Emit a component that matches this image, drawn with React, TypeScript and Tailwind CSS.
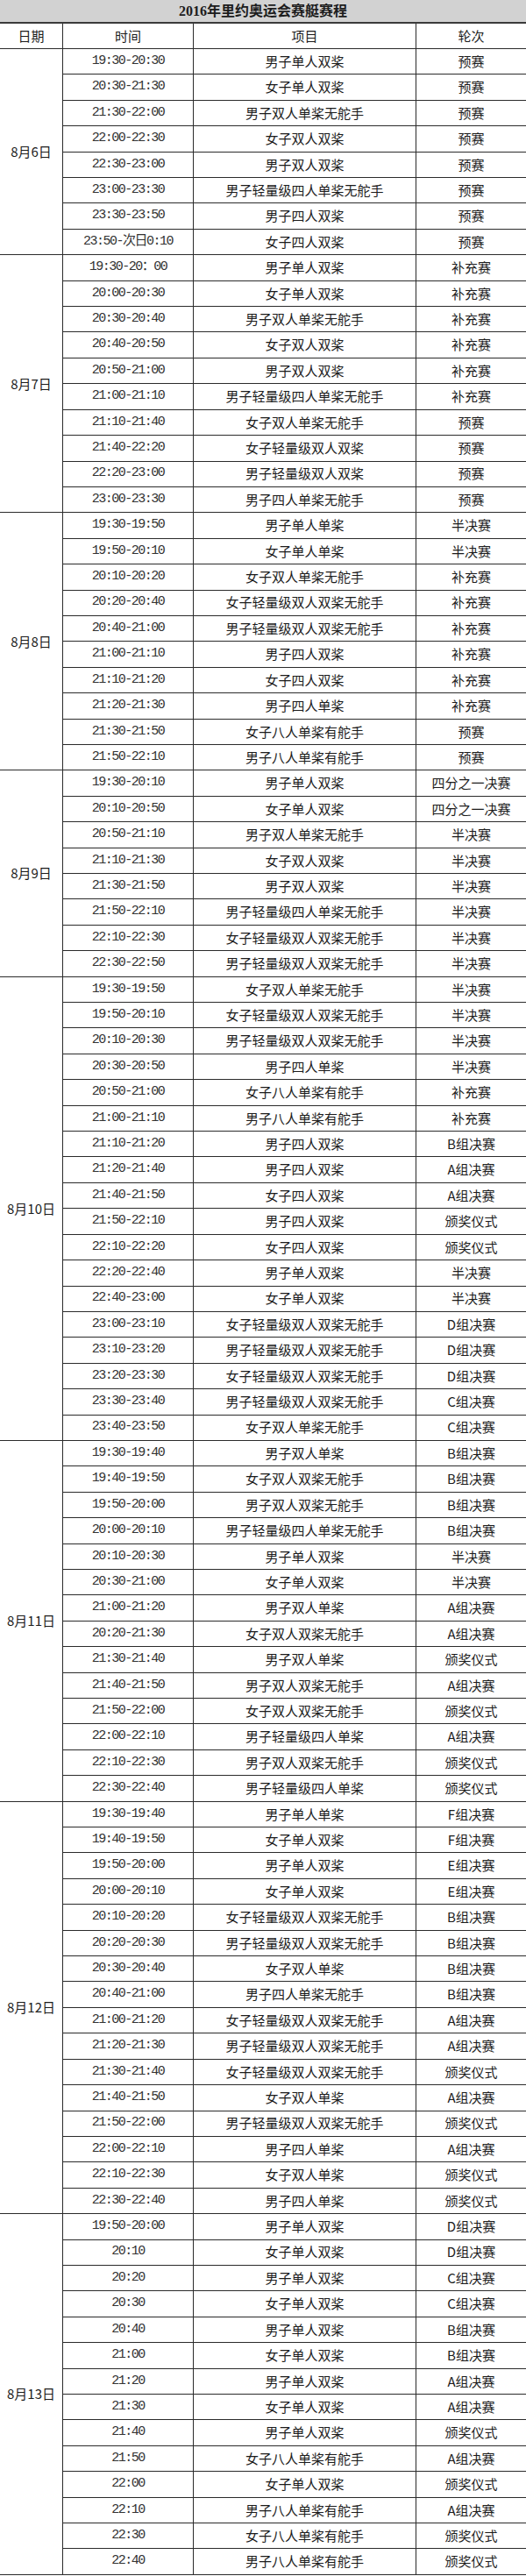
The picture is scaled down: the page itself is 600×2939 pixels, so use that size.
import clsx from "clsx";

type Row = [string, string, string];

const schedule: { date: string; rows: Row[] }[] = [
  {
    date: "8月6日",
    rows: [
      ["19:30-20:30", "男子单人双桨", "预赛"],
      ["20:30-21:30", "女子单人双桨", "预赛"],
      ["21:30-22:00", "男子双人单桨无舵手", "预赛"],
      ["22:00-22:30", "女子双人双桨", "预赛"],
      ["22:30-23:00", "男子双人双桨", "预赛"],
      ["23:00-23:30", "男子轻量级四人单桨无舵手", "预赛"],
      ["23:30-23:50", "男子四人双桨", "预赛"],
      ["23:50-次日0:10", "女子四人双桨", "预赛"],
    ],
  },
  {
    date: "8月7日",
    rows: [
      ["19:30-20：00", "男子单人双桨", "补充赛"],
      ["20:00-20:30", "女子单人双桨", "补充赛"],
      ["20:30-20:40", "男子双人单桨无舵手", "补充赛"],
      ["20:40-20:50", "女子双人双桨", "补充赛"],
      ["20:50-21:00", "男子双人双桨", "补充赛"],
      ["21:00-21:10", "男子轻量级四人单桨无舵手", "补充赛"],
      ["21:10-21:40", "女子双人单桨无舵手", "预赛"],
      ["21:40-22:20", "女子轻量级双人双桨", "预赛"],
      ["22:20-23:00", "男子轻量级双人双桨", "预赛"],
      ["23:00-23:30", "男子四人单桨无舵手", "预赛"],
    ],
  },
  {
    date: "8月8日",
    rows: [
      ["19:30-19:50", "男子单人单桨", "半决赛"],
      ["19:50-20:10", "女子单人单桨", "半决赛"],
      ["20:10-20:20", "女子双人单桨无舵手", "补充赛"],
      ["20:20-20:40", "女子轻量级双人双桨无舵手", "补充赛"],
      ["20:40-21:00", "男子轻量级双人双桨无舵手", "补充赛"],
      ["21:00-21:10", "男子四人双桨", "补充赛"],
      ["21:10-21:20", "女子四人双桨", "补充赛"],
      ["21:20-21:30", "男子四人单桨", "补充赛"],
      ["21:30-21:50", "女子八人单桨有舵手", "预赛"],
      ["21:50-22:10", "男子八人单桨有舵手", "预赛"],
    ],
  },
  {
    date: "8月9日",
    rows: [
      ["19:30-20:10", "男子单人双桨", "四分之一决赛"],
      ["20:10-20:50", "女子单人双桨", "四分之一决赛"],
      ["20:50-21:10", "男子双人单桨无舵手", "半决赛"],
      ["21:10-21:30", "女子双人双桨", "半决赛"],
      ["21:30-21:50", "男子双人双桨", "半决赛"],
      ["21:50-22:10", "男子轻量级四人单桨无舵手", "半决赛"],
      ["22:10-22:30", "女子轻量级双人双桨无舵手", "半决赛"],
      ["22:30-22:50", "男子轻量级双人双桨无舵手", "半决赛"],
    ],
  },
  {
    date: "8月10日",
    rows: [
      ["19:30-19:50", "女子双人单桨无舵手", "半决赛"],
      ["19:50-20:10", "女子轻量级双人双桨无舵手", "半决赛"],
      ["20:10-20:30", "男子轻量级双人双桨无舵手", "半决赛"],
      ["20:30-20:50", "男子四人单桨", "半决赛"],
      ["20:50-21:00", "女子八人单桨有舵手", "补充赛"],
      ["21:00-21:10", "男子八人单桨有舵手", "补充赛"],
      ["21:10-21:20", "男子四人双桨", "B组决赛"],
      ["21:20-21:40", "男子四人双桨", "A组决赛"],
      ["21:40-21:50", "女子四人双桨", "A组决赛"],
      ["21:50-22:10", "男子四人双桨", "颁奖仪式"],
      ["22:10-22:20", "女子四人双桨", "颁奖仪式"],
      ["22:20-22:40", "男子单人双桨", "半决赛"],
      ["22:40-23:00", "女子单人双桨", "半决赛"],
      ["23:00-23:10", "女子轻量级双人双桨无舵手", "D组决赛"],
      ["23:10-23:20", "男子轻量级双人双桨无舵手", "D组决赛"],
      ["23:20-23:30", "女子轻量级双人双桨无舵手", "D组决赛"],
      ["23:30-23:40", "男子轻量级双人双桨无舵手", "C组决赛"],
      ["23:40-23:50", "女子双人单桨无舵手", "C组决赛"],
    ],
  },
  {
    date: "8月11日",
    rows: [
      ["19:30-19:40", "男子双人单桨", "B组决赛"],
      ["19:40-19:50", "女子双人双桨无舵手", "B组决赛"],
      ["19:50-20:00", "男子双人双桨无舵手", "B组决赛"],
      ["20:00-20:10", "男子轻量级四人单桨无舵手", "B组决赛"],
      ["20:10-20:30", "男子单人双桨", "半决赛"],
      ["20:30-21:00", "女子单人双桨", "半决赛"],
      ["21:00-21:20", "男子双人单桨", "A组决赛"],
      ["20:20-21:30", "女子双人双桨无舵手", "A组决赛"],
      ["21:30-21:40", "男子双人单桨", "颁奖仪式"],
      ["21:40-21:50", "男子双人双桨无舵手", "A组决赛"],
      ["21:50-22:00", "女子双人双桨无舵手", "颁奖仪式"],
      ["22:00-22:10", "男子轻量级四人单桨", "A组决赛"],
      ["22:10-22:30", "男子双人双桨无舵手", "颁奖仪式"],
      ["22:30-22:40", "男子轻量级四人单桨", "颁奖仪式"],
    ],
  },
  {
    date: "8月12日",
    rows: [
      ["19:30-19:40", "男子单人单桨", "F组决赛"],
      ["19:40-19:50", "女子单人双桨", "F组决赛"],
      ["19:50-20:00", "男子单人双桨", "E组决赛"],
      ["20:00-20:10", "女子单人双桨", "E组决赛"],
      ["20:10-20:20", "女子轻量级双人双桨无舵手", "B组决赛"],
      ["20:20-20:30", "男子轻量级双人双桨无舵手", "B组决赛"],
      ["20:30-20:40", "女子双人单桨", "B组决赛"],
      ["20:40-21:00", "男子四人单桨无舵手", "B组决赛"],
      ["21:00-21:20", "女子轻量级双人双桨无舵手", "A组决赛"],
      ["21:20-21:30", "男子轻量级双人双桨无舵手", "A组决赛"],
      ["21:30-21:40", "女子轻量级双人双桨无舵手", "颁奖仪式"],
      ["21:40-21:50", "女子双人单桨", "A组决赛"],
      ["21:50-22:00", "男子轻量级双人双桨无舵手", "颁奖仪式"],
      ["22:00-22:10", "男子四人单桨", "A组决赛"],
      ["22:10-22:30", "女子双人单桨", "颁奖仪式"],
      ["22:30-22:40", "男子四人单桨", "颁奖仪式"],
    ],
  },
  {
    date: "8月13日",
    rows: [
      ["19:50-20:00", "男子单人双桨", "D组决赛"],
      ["20:10", "女子单人双桨", "D组决赛"],
      ["20:20", "男子单人双桨", "C组决赛"],
      ["20:30", "女子单人双桨", "C组决赛"],
      ["20:40", "男子单人双桨", "B组决赛"],
      ["21:00", "女子单人双桨", "B组决赛"],
      ["21:20", "男子单人双桨", "A组决赛"],
      ["21:30", "女子单人双桨", "A组决赛"],
      ["21:40", "男子单人双桨", "颁奖仪式"],
      ["21:50", "女子八人单桨有舵手", "A组决赛"],
      ["22:00", "女子单人双桨", "颁奖仪式"],
      ["22:10", "男子八人单桨有舵手", "A组决赛"],
      ["22:30", "女子八人单桨有舵手", "颁奖仪式"],
      ["22:40", "男子八人单桨有舵手", "颁奖仪式"],
    ],
  },
];

const cjk = "font-['Noto_Sans_CJK_SC',sans-serif]";
const mono = "font-['Liberation_Mono','Noto_Sans_CJK_SC',monospace] tracking-[-1.5px]";

export default function App() {
  return (
    <div className={clsx("w-[600px] bg-white text-[15px] text-[#1c1c1c]", cjk)}>
      <div className="h-[27px] bg-[#d2d2d2] border-b-2 border-[#3a3a3a] flex items-center justify-center font-bold text-[16px] font-['Liberation_Serif','Noto_Sans_CJK_SC',serif]">
        2016年里约奥运会赛艇赛程
      </div>

      <div className="grid grid-cols-[72px_149px_254px_1fr] h-[29px] border-b border-[#2b2b2b]">
        <div className="flex items-center justify-center border-r border-[#2b2b2b]">日期</div>
        <div className="flex items-center justify-center border-r border-[#2b2b2b]">时间</div>
        <div className="flex items-center justify-center border-r border-[#2b2b2b]">项目</div>
        <div className="flex items-center justify-center">轮次</div>
      </div>

      {schedule.map((group) => (
        <div key={group.date} className="flex">
          <div className="w-[72px] shrink-0 flex items-center justify-center border-r border-b border-[#2b2b2b]">
            {group.date}
          </div>
          <div className="flex-1">
            {group.rows.map(([time, event, round], i) => (
              <div
                key={i}
                className="grid grid-cols-[149px_254px_1fr] h-[29.42px] border-b border-[#2b2b2b]"
              >
                <div className={clsx("flex items-center justify-center border-r border-[#2b2b2b] text-[#333]", mono)}>
                  {time}
                </div>
                <div className="flex items-center justify-center border-r border-[#2b2b2b]">{event}</div>
                <div className="flex items-center justify-center">{round}</div>
              </div>
            ))}
          </div>
        </div>
      ))}
    </div>
  );
}
